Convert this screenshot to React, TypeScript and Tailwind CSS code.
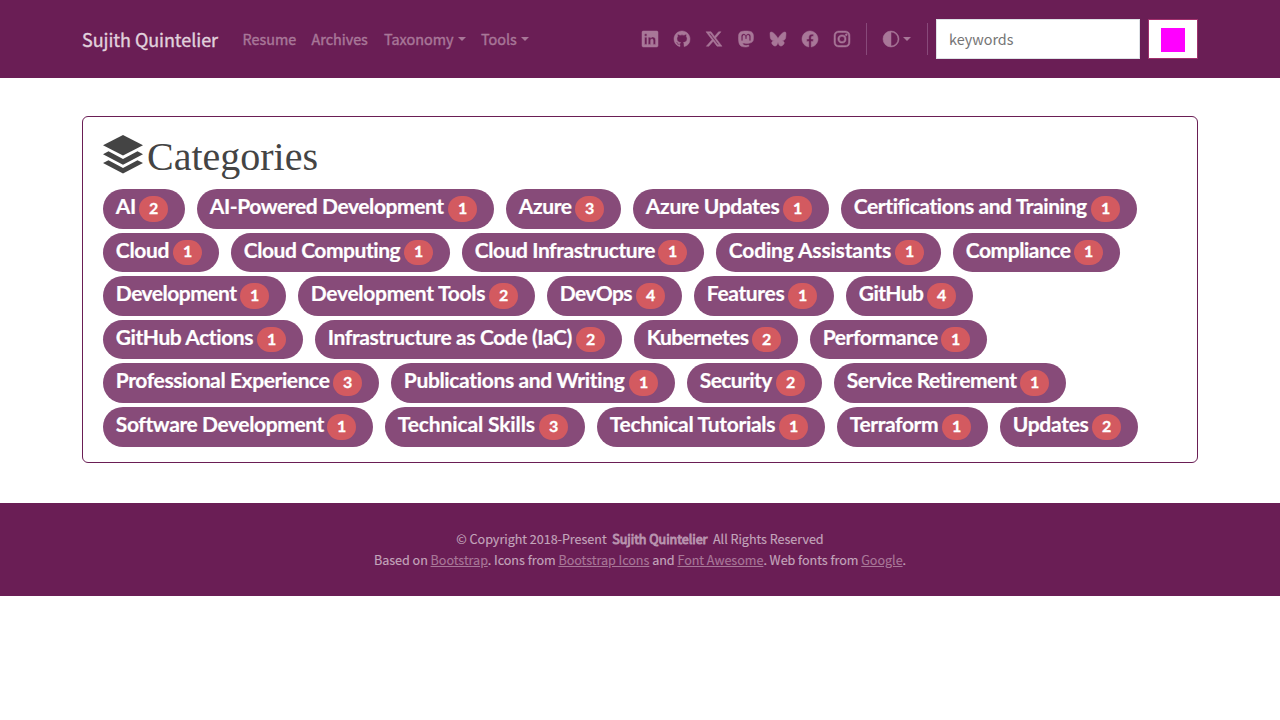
import { BsLinkedin, BsGithub, BsTwitterX, BsMastodon, BsFacebook, BsInstagram, BsCircleHalf } from "react-icons/bs";

type Category = { name: string; count: number; width: number; spacing: number };

const rows: Category[][] = [
  [
    { name: "AI", count: 2, width: 82, spacing: -0.3 },
    { name: "AI-Powered Development", count: 1, width: 297, spacing: -0.41 },
    { name: "Azure", count: 3, width: 115, spacing: -0.4 },
    { name: "Azure Updates", count: 1, width: 196, spacing: -0.32 },
    { name: "Certifications and Training", count: 1, width: 296, spacing: -0.41 },
  ],
  [
    { name: "Cloud", count: 1, width: 116, spacing: -0.3 },
    { name: "Cloud Computing", count: 1, width: 219, spacing: -0.45 },
    { name: "Cloud Infrastructure", count: 1, width: 242, spacing: -0.43 },
    { name: "Coding Assistants", count: 1, width: 225, spacing: -0.17 },
    { name: "Compliance", count: 1, width: 167, spacing: -0.47 },
  ],
  [
    { name: "Development", count: 1, width: 183, spacing: -0.5 },
    { name: "Development Tools", count: 2, width: 237, spacing: -0.3 },
    { name: "DevOps", count: 4, width: 135, spacing: -0.6 },
    { name: "Features", count: 1, width: 140, spacing: -0.35 },
    { name: "GitHub", count: 4, width: 127, spacing: -0.6 },
  ],
  [
    { name: "GitHub Actions", count: 1, width: 200, spacing: -0.43 },
    { name: "Infrastructure as Code (IaC)", count: 2, width: 307, spacing: -0.38 },
    { name: "Kubernetes", count: 2, width: 164, spacing: -0.62 },
    { name: "Performance", count: 1, width: 177, spacing: -0.45 },
  ],
  [
    { name: "Professional Experience", count: 3, width: 276, spacing: -0.4 },
    { name: "Publications and Writing", count: 1, width: 284, spacing: -0.35 },
    { name: "Security", count: 2, width: 135, spacing: -0.6 },
    { name: "Service Retirement", count: 1, width: 232, spacing: -0.42 },
  ],
  [
    { name: "Software Development", count: 1, width: 270, spacing: -0.4 },
    { name: "Technical Skills", count: 3, width: 200, spacing: -0.13 },
    { name: "Technical Tutorials", count: 1, width: 228, spacing: -0.32 },
    { name: "Terraform", count: 1, width: 151, spacing: -0.4 },
    { name: "Updates", count: 2, width: 138, spacing: -0.3 },
  ],
];

function BlueskyIcon() {
  return (
    <svg viewBox="0 0 16 16" className="size-4" fill="currentColor">
      <path d="M3.468 1.948C5.303 3.325 7.276 6.118 8 7.616c.725-1.498 2.698-4.29 4.532-5.668C13.855.955 16 .186 16 2.632c0 .489-.28 4.105-.444 4.692-.572 2.04-2.653 2.561-4.504 2.246 3.236.551 4.06 2.375 2.281 4.2-3.376 3.464-4.852-.87-5.23-1.98-.07-.204-.103-.3-.103-.218 0-.081-.033.014-.102.218-.379 1.11-1.855 5.444-5.231 1.98-1.778-1.825-.955-3.65 2.28-4.2-1.85.315-3.932-.205-4.503-2.246C.28 6.737 0 3.12 0 2.632 0 .186 2.145.955 3.468 1.948" />
    </svg>
  );
}

function StackIcon() {
  return (
    <svg viewBox="0 0 40 40" className="size-10" fill="currentColor">
      <path d="M20 0 40 10.2 20 20.6 0 10.2Z" />
      <path d="M5.500 16.300 20 24 34.500 16.300 40 19.200 20 29.800 0 19.200Z" />
      <path d="M5.500 25.200 20 32.900 34.500 25.200 40 28.100 20 38.600 0 28.100Z" />
    </svg>
  );
}

function Caret() {
  return <span className="ml-1 h-0 w-0 border-x-[4.5px] border-t-[4.5px] border-x-transparent border-t-current" />;
}

function Pill({ item }: { item: Category }) {
  return (
    <li
      className="flex h-[39.6px] items-start justify-between rounded-full bg-[#874b79] pr-[17.3px] pl-[12.8px] text-white"
      style={{ width: item.width }}
    >
      <span
        className="mt-[2px] font-[Lato,sans-serif] text-[21px] leading-[30px] font-bold whitespace-nowrap [-webkit-text-stroke:0.2px_currentColor]"
        style={{ letterSpacing: item.spacing }}
      >
        {item.name}
      </span>
      <span className="mt-[7px] flex h-[25.6px] w-[28.3px] shrink-0 items-center justify-center rounded-full bg-[#d35a60] pb-[2px] font-[Lato,sans-serif] text-[16px] leading-none font-bold [-webkit-text-stroke:0.3px_currentColor]">
        {item.count}
      </span>
    </li>
  );
}

export default function App() {
  return (
    <div className="min-h-[720px] bg-white font-['Noto_Sans_CJK_SC','Noto_Sans_CJK_JP',sans-serif]">
      <header className="flex h-[78px] items-center bg-[#6a1e55] px-[82px] text-[#a87798]">
        <a className="w-[160.5px] pb-px text-[18px] leading-[30px] tracking-[-0.06px] whitespace-nowrap text-[#e1d2dd] [-webkit-text-stroke:0.35px_currentColor]">Sujith Quintelier</a>
        <nav className="flex items-center text-[14.4px] leading-6 [-webkit-text-stroke:0.4px_currentColor]">
          <a className="w-[69px]">Resume</a>
          <a className="w-[72.5px]">Archives</a>
          <a className="flex w-[97px] items-center">Taxonomy<Caret /></a>
          <a className="flex items-center">Tools<Caret /></a>
        </nav>
        <div className="ml-auto flex items-center">
          <div className="flex items-center gap-4 pr-4 text-base [&_svg]:overflow-visible [&_svg]:stroke-current [&_svg]:stroke-[0.5px]">
            <BsLinkedin /><BsGithub /><BsTwitterX /><BsMastodon /><BlueskyIcon /><BsFacebook /><BsInstagram />
          </div>
          <div className="flex h-8 w-[62px] items-center border-x border-[#88497a] pl-[15.5px] text-base [&_svg]:overflow-visible [&_svg]:stroke-current [&_svg]:stroke-[0.5px]"><BsCircleHalf /><Caret /></div>
          <input
            placeholder="keywords"
            className="ml-2 h-10 w-[204px] border border-[#dee2e6] bg-white px-3 pb-0.5 text-[14.4px] text-[#212529] placeholder:text-[#757575]"
          />
          <button aria-label="Search" className="ml-2 flex h-10 w-[50px] items-center justify-center border border-[#a0306c] bg-white">
            <span className="mt-0.5 size-6 bg-[#ff00ff]" />
          </button>
        </div>
      </header>
      <main className="px-[82px] pt-[38px] pb-10">
        <section className="h-[347px] rounded-md border border-[#6a1e55] px-5 pt-4">
          <h1 className="flex h-12 items-start gap-1 text-[#444444]">
            <span className="mt-[2px]"><StackIcon /></span>
            <span className="font-['Liberation_Serif',serif] text-[40px] leading-[48px]">Categories</span>
          </h1>
          <div className="mt-2 flex flex-col gap-1">
            {rows.map((row, i) => (
              <ul key={i} className="flex gap-3">
                {row.map((item) => <Pill key={item.name} item={item} />)}
              </ul>
            ))}
          </div>
        </section>
      </main>
      <footer className="h-[93px] bg-[#6a1e55] pt-[25px] text-center text-[12.6px] leading-[21px] tracking-[-0.04px] text-[#c3a5bb] [-webkit-text-stroke:0.15px_currentColor]">
        <p>© Copyright 2018-Present&nbsp; <strong className="font-normal text-[#b893ae] [-webkit-text-stroke:0.9px_currentColor]">Sujith Quintelier</strong>&nbsp; All Rights Reserved</p>
        <p>
          Based on <a className="text-[#a87798] underline">Bootstrap</a>. Icons from <a className="text-[#a87798] underline">Bootstrap Icons</a> and{" "}
          <a className="text-[#a87798] underline">Font Awesome</a>. Web fonts from <a className="text-[#a87798] underline">Google</a>.
        </p>
      </footer>
    </div>
  );
}
